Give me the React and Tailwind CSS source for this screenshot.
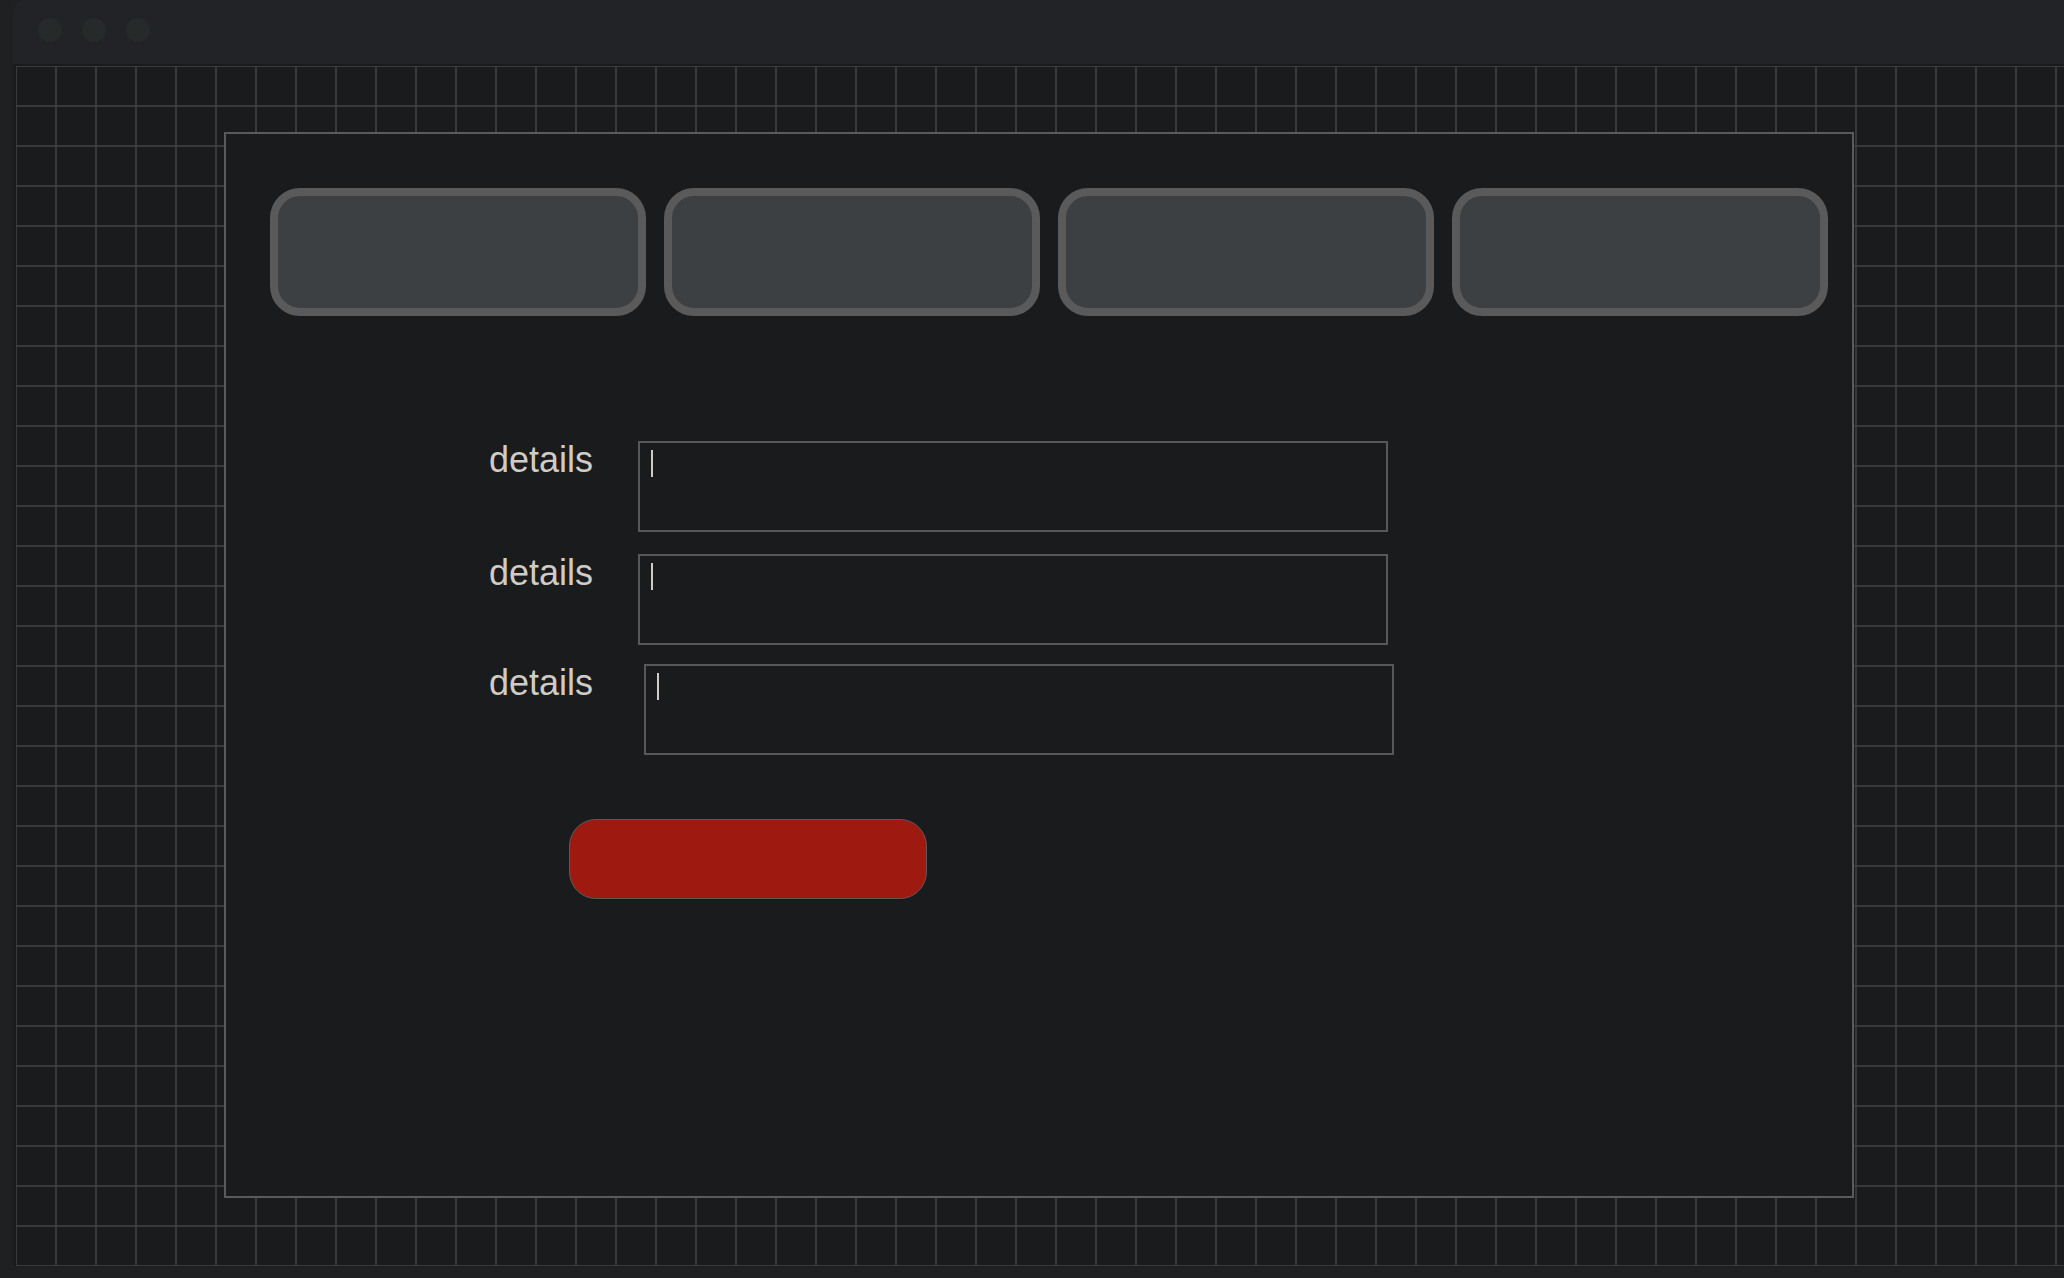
import React from "react";

const tabs = [1, 2, 3, 4];

const fields = [
  { id: 1, labelW: "w-[149px]", gap: "" },
  { id: 2, labelW: "w-[149px]", gap: "mt-[22px]" },
  { id: 3, labelW: "w-[155px]", gap: "mt-[19px]" },
];

const Field = ({ labelW, gap }) => (
  <div className={`flex items-start ${gap}`}>
    <span className={`${labelW} shrink-0 text-[36px] leading-none text-[#d0ccc5] pt-[1px]`}>details</span>
    <div className="w-[750px] h-[91px] border-2 border-[#585858] bg-[#1a1b1d] pl-[11px] pt-[7px]">
      {/* caret */}
      <div className="w-[2px] h-[27px] bg-[#d0ccc5]" />
    </div>
  </div>
);

export default function App() {
  return (
    <div
      className="w-[2064px] h-[1278px] bg-[#1f2022] pl-[13px] pb-[12px] flex overflow-hidden"
      style={{ fontFamily: '"Liberation Sans", Arial, sans-serif' }}
    >
      <div className="flex-1 flex flex-col rounded-tl-[12px] overflow-hidden">
        {/* title bar */}
        <div className="h-[64px] shrink-0 bg-[#222326] flex items-start gap-[20px] pl-[25px] pt-[18px]">
          <div className="w-[24px] h-[24px] rounded-full bg-[#262a2a]" />
          <div className="w-[24px] h-[24px] rounded-full bg-[#262a2a]" />
          <div className="w-[24px] h-[24px] rounded-full bg-[#262a2a]" />
        </div>

        {/* canvas */}
        <div className="flex-1 flex bg-[#1a1b1d] pt-[2px] pl-[3px]">
          <div className="flex-1 pl-[208px] pt-[66px] bg-[linear-gradient(to_right,#38393a_2px,transparent_2px),linear-gradient(to_bottom,#38393a_2px,transparent_2px)] bg-[size:40px_40px] bg-[position:39px_39px]">
            {/* panel */}
            <div className="w-[1630px] h-[1066px] border-2 border-[#5a5a5a] bg-[#1a1b1d] flex flex-col">
              {/* tabs */}
              <div className="flex gap-[18px] ml-[44px] mt-[54px]">
                {tabs.map((t) => (
                  <div
                    key={t}
                    className="w-[376px] h-[128px] rounded-[30px] border-[8px] border-[#5a5a5a] bg-[#3d4043]"
                  />
                ))}
              </div>

              {/* form */}
              <div className="flex flex-col ml-[263px] mt-[125px]">
                {fields.map((f) => (
                  <Field key={f.id} labelW={f.labelW} gap={f.gap} />
                ))}
              </div>

              <button className="ml-[343px] mt-[64px] w-[358px] h-[80px] rounded-[27px] border-[1.5px] border-[#5a5a5a] bg-[#9e1a10]" />
            </div>
          </div>
        </div>
      </div>
    </div>
  );
}
